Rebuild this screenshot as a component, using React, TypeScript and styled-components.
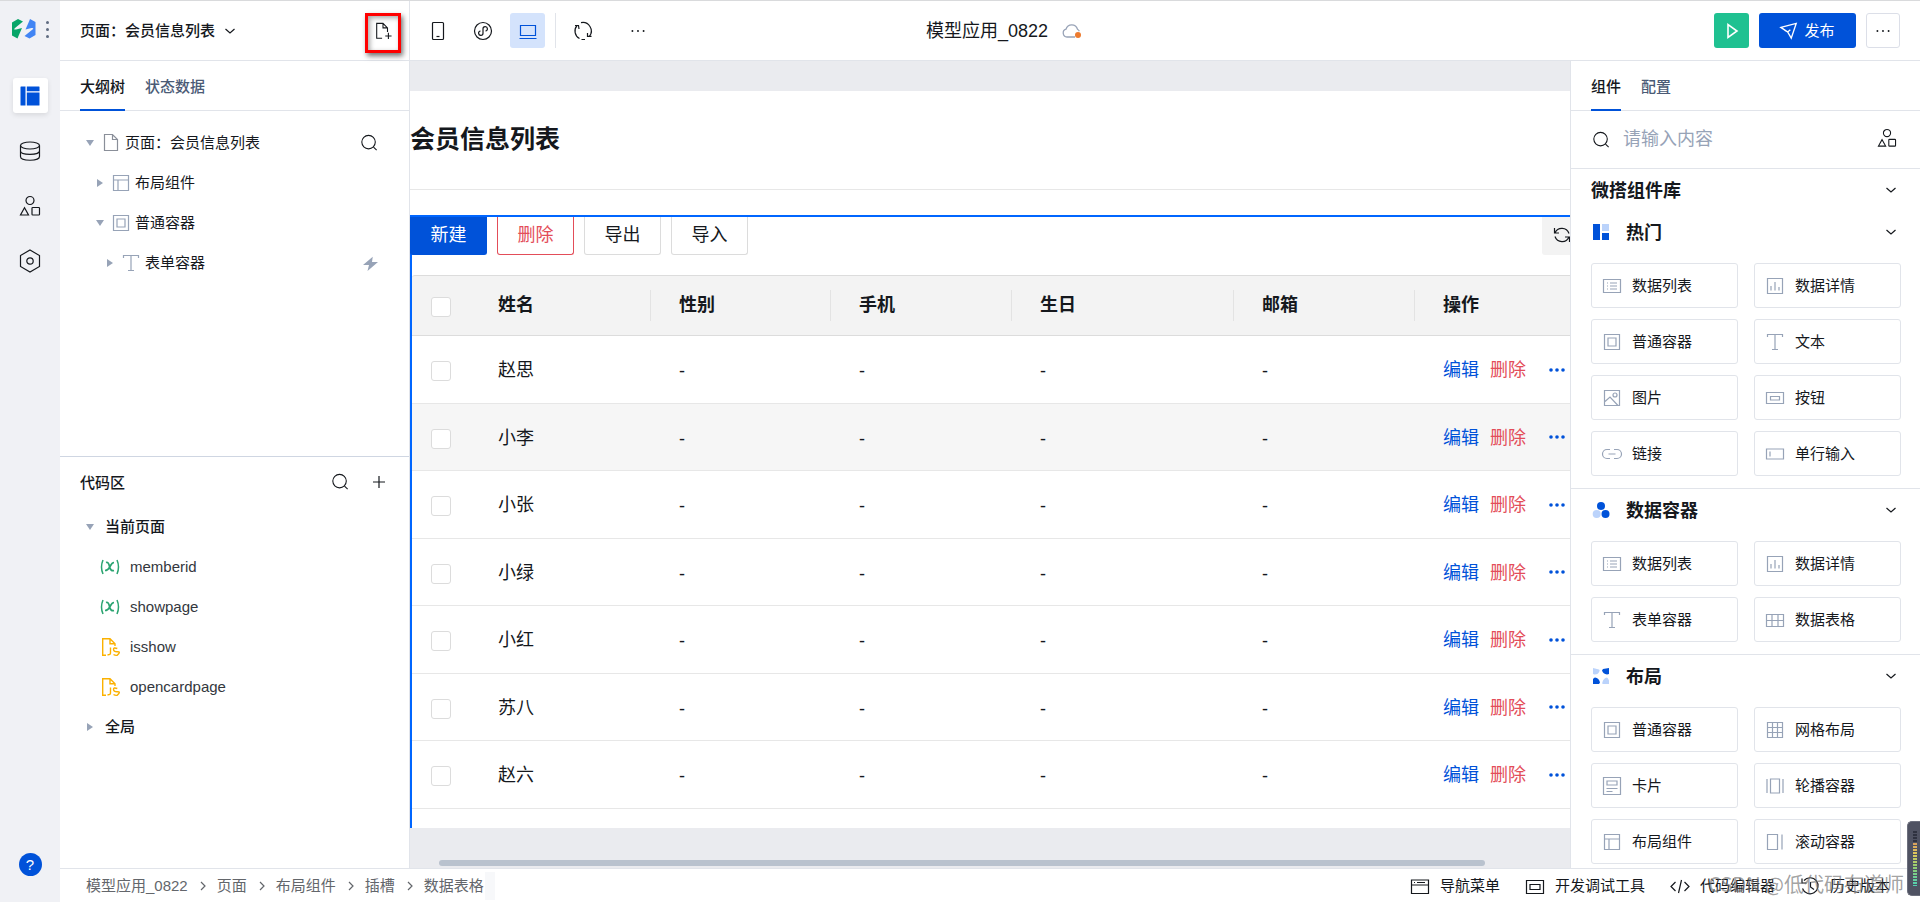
import React from 'react';
import styled, { createGlobalStyle, css } from 'styled-components';

const color = {
  brand: '#0052d9',
  select: '#0066ff',
  line: '#e1e4ea',
  text: '#15181d',
  sub: '#4b5b76',
  mute: '#97a3b7',
  danger: '#e34d59',
  canvas: '#eaebef',
};

const GlobalStyle = createGlobalStyle`
  * { box-sizing: border-box; }
  body { margin: 0; overflow: hidden; }
  body, button, input, table {
    font-family: "Liberation Sans", "Noto Sans CJK SC", sans-serif;
    font-size: 15px;
    color: ${color.text};
  }
  button { border: 0; padding: 0; background: none; cursor: pointer; }
  a { color: inherit; text-decoration: none; }
  h1, h2, h3, ul { margin: 0; padding: 0; font-size: inherit; list-style: none; }
`;

/* ---------- icons ---------- */

const Svg = styled.svg<{ $color?: string }>`
  display: block;
  flex: none;
  overflow: visible;
  fill: none;
  stroke: ${(p) => p.$color || 'currentColor'};
`;

type IconProps = { name: string; size?: number; color?: string };

const S = (d: string) => <path d={d} />;

const icons: Record<string, React.ReactNode> = {
  chevronDown: S('M5.5 8l4.5 4 4.5-4'),
  chevronRight: S('M8 6l4 4-4 4'),
  search: <><circle cx="9.5" cy="9" r="7.500" />{S('M15 14.500l3.500 3.500')}</>,
  plus: S('M4 10h12M10 4v12'),
  filePlus: S('M9 18H3V1.500h7l5 5V11M10 1.500v5h5M16 12v7M12.500 15.500h7'),
  file: S('M3.500 1.500h8l5 5v11h-13zM11.500 1.500v5h5'),
  phone: <><rect x="4.500" y="1.500" width="11" height="17" rx="1" />{S('M8.500 15.500h3')}</>,
  mini: <><circle cx="10" cy="10" r="8.500" />{S('M7.500 10a2.200 2.200 0 1 0 2.500 2.200V7.800A2.200 2.200 0 1 1 12.500 10')}</>,
  laptop: S('M2.500 4.500h15v10h-15zM1.500 17.500h17'),
  cycle: S('M6.500 17.500A8.500 8.500 0 0 1 4 4.500M2 4.500h3.500L6 8M8 1.700a8.500 8.500 0 0 1 8.500 13.500M18.500 15.300h-4V12M8.500 18.500h3.500'),
  refresh: S('M3 8a7.500 7.500 0 0 1 14 .5M17 12a7.500 7.500 0 0 1-14-.5M2.500 3v5h4.500M17.500 17v-5H13'),
  dots: <g fill="currentColor" stroke="none"><circle cx="3" cy="10" r="1.200" /><circle cx="10" cy="10" r="1.200" /><circle cx="17" cy="10" r="1.200" /></g>,
  boldDots: <g fill="currentColor" stroke="none"><circle cx="4" cy="10" r="1.800" /><circle cx="10" cy="10" r="1.800" /><circle cx="16" cy="10" r="1.800" /></g>,
  play: <path d="M6 3.500v13l9-6.500z" strokeWidth="1.600" />,
  send: <path d="M1 6L18 1.500 12.500 18 8.500 11zM8.500 11l3-2.500M5 9l3.500 2" strokeWidth="1.500" />,
  cloud: <><path d="M13 16H5a4 4 0 0 1-1-7.800 6 6 0 0 1 11.500 0q1.500 1 1.800 2" stroke="#98a3b7" strokeWidth="1.300" /><circle cx="16" cy="14" r="3" fill="#ed7b2f" stroke="none" /></>,
  database: <><ellipse cx="10" cy="4.500" rx="9.500" ry="3.500" />{S('M.5 4.500v11c0 5 19 5 19 0v-11M.5 10c0 4.500 19 4.500 19 0')}</>,
  shapes: <><circle cx="10" cy="4.500" r="4" /><rect x="12" y="11.500" width="7.500" height="7.500" rx=".8" />{S('M4.500 11.800L.5 19h8z')}</>,
  hex: <><path d="M10 -1l9.500 5.500v11L10 21 .5 15.500v-11z" /><circle cx="10" cy="10" r="3.200" /></>,
  bolt: <path d="M13 1L0 12h8L6 20 20 8h-8z" fill={color.mute} stroke="none" />,
  variable: <><path d="M3 3q-3 7 0 14M17 3q3 7 0 14" strokeWidth="1.500" /><path d="M6 5.500q2.500-1 3.500 4t4.500 4M14 5.500q-2 0-4 4t-5 4" strokeWidth="1.700" /></>,
  layout: S('M2.500 2.500h15v15h-15zM2.500 7h15M7 7v10.500'),
  box: S('M2.500 2.500h15v15h-15zM6 6h8v8H6z'),
  text: S('M2.500 5V2.500h15V5M10 2.500v15M7 17.500h6'),
  list: S('M1.500 3.500h17v13h-17zM5 7h1M8 7h7M5 10h1M8 10h7M5 13h1M8 13h7'),
  chart: S('M2.500 2.500h15v15h-15zM6 10v4.500M10 6v8.500M14 11v3.500'),
  image: <>{S('M2.500 2.500h15v15h-15zM3 13.500l5-4.500 8 8.500')}<circle cx="13" cy="7" r="2" /></>,
  button: S('M1.500 4.500h17v11h-17zM5.500 8.500h9v3.500h-9z'),
  link: S('M8 5.500H5a4.500 4.500 0 0 0 0 9h3M12 5.500h3a4.500 4.500 0 0 1 0 9h-3M6.500 10h7'),
  input: S('M1.500 5h17v10h-17zM5 7.500v5'),
  table: S('M1.500 4.500h17v12h-17zM1.500 10.500h17M7 4.500v12M13 4.500v12'),
  grid: S('M2.500 2.500h15v15h-15zM2.500 7.500h15M2.500 12.500h15M7.500 2.500v15M12.500 2.500v15'),
  card: S('M1.500 1.500h17v17h-17zM5 5h10v4H5zM4.500 12.500h11M4.500 15.500h6'),
  carousel: S('M5.500 3h9v14h-9zM2 3v14M18 3v14'),
  scroll: S('M2.500 2.500h10v15h-10zM17 2.500v15'),
  navMenu: S('M1.500 4h17v13.500h-17zM1.500 9h17M4 6.500h1M7 6.500h8'),
  devtool: S('M1.500 4.500h17v13h-17zM5 8.500h10v5H5z'),
  code: S('M5.500 6L1 10.500 5.500 15M14.500 6l4.500 4.500-4.500 4.500M11.500 4l-3 13'),
  history: S('M4 4.500a8 8 0 1 1-1.500 8M2 2.500v4.500h4.500M10.500 6v5l3.500 2.500'),
};

const Icon = ({ name, size = 20, color: c }: IconProps) => (
  <Svg width={size} height={size} viewBox="0 0 20 20" strokeWidth="1.200" $color={c} color={c} aria-hidden="true">
    {icons[name]}
  </Svg>
);

const Logo = () => (
  <Svg width="24" height="20" viewBox="0 0 24 20" $color="none" aria-hidden="true">
    <path d="M0 3.500L6 0l5 2.500L3 9q-2 2 1 1.500l6-1.500-3.500 8-1 2.500-5.500-3z" fill="#07a568" />
    <path d="M23.500 16L17.500 19.500l-5-2.500 8-6.500q2-2-1-1.500l-6 1.500 3.500-8L18 0l5.500 3z" fill="#4285f4" />
  </Svg>
);

const RailLayout = () => (
  <Svg width="20" height="20" viewBox="0 0 20 20" $color="none" aria-hidden="true">
    <path d="M1 .5h4.500v19H1a.5.5 0 0 1-.5-.5V1a.5.5 0 0 1 .5-.5zM6.800.5H19q.5 0 .5.5v4.300H6.800zM6.800 6.500h12.700V19q0 .5-.5.500H6.800z" fill={color.brand} />
  </Svg>
);

const JsFile = () => (
  <Svg width="16" height="18" viewBox="0 0 16 18" $color="#fbb100" strokeWidth="1.400" aria-hidden="true">
    <path d="M4 17.300H.700V.700H8l5 5V8M8 .700v5h5" />
    <path d="M8.500 9.500V15q0 2-3 1.700M15.300 10.500q-4-1.500-3.800 1t4 2.300-.3 3.500q-2 .3-3.700-.8" />
  </Svg>
);

const HotMark = () => (
  <Svg width="16" height="16" viewBox="0 0 16 16" $color="none" aria-hidden="true">
    <path d="M0 0h7v16H0zM9 9h7v7H9z" fill={color.brand} /><path d="M9 0h7v7H9z" fill="#bbd3fb" />
  </Svg>
);
const DataMark = () => (
  <Svg width="16" height="16" viewBox="0 0 16 16" $color="none" aria-hidden="true">
    <circle cx="8" cy="4" r="4" fill={color.brand} /><circle cx="12.500" cy="12" r="4" fill={color.brand} /><circle cx="3.700" cy="12" r="4" fill="#bbd3fb" />
  </Svg>
);
const LayoutMark = () => (
  <Svg width="16" height="16" viewBox="0 0 16 16" $color="none" aria-hidden="true">
    <path d="M16 0v6l-2 .500q-4-.5-5-4L10 1zM0 16v-5q1-1.500 2-1.500 4 .500 5 5L6 16z" fill={color.brand} />
    <path d="M0 0l6 1.500q1 .500.500 1.500-1 3.500-5 3.500L0 6zM16 16H9.500q-.5-1 0-2 1-4 4.500-4.500 1 .500 2 3z" fill="#bbd3fb" />
  </Svg>
);

/* ---------- frame ---------- */

const Label = styled.span`
  padding-bottom: 3px;
`;

const Shell = styled.div`
  display: flex;
  height: 100vh;
  border-top: 1px solid #d9dadc;
  background: #fff;
`;

const Rail = styled.nav`
  display: flex;
  flex-direction: column;
  align-items: center;
  width: 60px;
  flex: none;
  padding: 18px 0 26px;
  background: #f0f1f5;
`;
const Brand = styled.div`
  display: flex;
  align-items: center;
  gap: 10px;
  height: 20px;
  margin-bottom: 39px;
`;
const MoreVertical = styled.button`
  display: grid;
  gap: 4px;
  i { width: 3px; height: 3px; border-radius: 50%; background: #5f6b80; }
`;
const RailButton = styled.button<{ $active?: boolean }>`
  display: grid;
  place-items: center;
  width: 35px;
  height: 35px;
  margin-bottom: 20px;
  border-radius: 3px;
  ${(p) => p.$active && css`background: #fff; box-shadow: 0 2px 5px rgba(0, 0, 0, 0.1);`}
`;
const HelpButton = styled.button`
  width: 23px;
  height: 23px;
  margin-top: auto;
  border-radius: 50%;
  background: ${color.brand};
  color: #fff;
`;

const Main = styled.div`
  display: flex;
  flex-direction: column;
  flex: 1;
  min-width: 0;
`;
const Header = styled.header`
  display: grid;
  grid-template-columns: 1fr auto 1fr;
  height: 60px;
  flex: none;
  border-bottom: 1px solid ${color.line};
`;
const HeaderGroup = styled.div<{ $end?: boolean }>`
  display: flex;
  align-items: center;
  gap: 10px;
  ${(p) => p.$end && css`justify-content: flex-end; padding-right: 20px;`}
`;
const PageBar = styled.div`
  display: flex;
  align-items: center;
  justify-content: space-between;
  width: 350px;
  height: 100%;
  padding: 0 8px 0 20px;
  border-right: 1px solid ${color.line};
`;
const PagePicker = styled.button`
  display: flex;
  align-items: center;
  gap: 5px;
  font-weight: 500;
`;
const Marked = styled.div`
  display: grid;
  place-items: center;
  width: 36px;
  height: 40px;
  margin-top: 4px;
  padding-bottom: 4px;
  border: 3px solid #f00;
  box-shadow: 2px 3px 5px rgba(0, 0, 0, 0.55), inset 2px 2px 5px rgba(0, 0, 0, 0.35);
`;
const ToolButton = styled.button<{ $active?: boolean }>`
  display: grid;
  place-items: center;
  width: 35px;
  height: 35px;
  border-radius: 3px;
  ${(p) => p.$active && css`background: #d4e3fc; color: ${color.brand};`}
`;
const ToolGroup = styled.div`
  display: flex;
  gap: 20px;
  padding-left: 9px;
  border-left: 1px solid ${color.line};
`;
const AppTitle = styled.div`
  display: flex;
  align-items: center;
  gap: 14px;
  padding-left: 28px;
  font-size: 18px;
`;
const ActionButton = styled.button<{ $kind: 'run' | 'publish' | 'plain' }>`
  display: flex;
  align-items: center;
  justify-content: center;
  gap: 6px;
  width: ${(p) => ({ run: 35, publish: 97, plain: 34 })[p.$kind]}px;
  height: 35px;
  border-radius: 3px;
  color: ${(p) => (p.$kind === 'plain' ? color.text : '#fff')};
  background: ${(p) => ({ run: '#1fc191', publish: color.brand, plain: '#fff' })[p.$kind]};
  border: ${(p) => (p.$kind === 'plain' ? '1px solid #dcdfe8' : '0')};
`;

const Body = styled.div`
  display: flex;
  flex: 1;
  min-height: 0;
`;

/* ---------- side panels ---------- */

const LeftPanel = styled.aside`
  display: flex;
  flex-direction: column;
  width: 350px;
  flex: none;
  border-right: 1px solid ${color.line};
`;
const Tabs = styled.div`
  display: flex;
  gap: 20px;
  height: 50px;
  flex: none;
  padding: 0 20px;
  border-bottom: 1px solid ${color.line};
`;
const Tab = styled.button<{ $active?: boolean }>`
  height: 50px;
  color: ${(p) => (p.$active ? color.text : color.sub)};
  font-weight: 500;
  border-bottom: 2px solid ${(p) => (p.$active ? color.brand : 'transparent')};
`;
const Outline = styled.ul`
  flex: 345 1 0;
  min-height: 0;
  li:first-child { margin-top: 12px; }
`;
const TreeRow = styled.li<{ $level?: number; $strong?: boolean }>`
  display: flex;
  align-items: center;
  height: 40px;
  padding: 0 31px 0 ${(p) => 20 + (p.$level || 0) * 10}px;
  font-weight: ${(p) => (p.$strong ? 500 : 400)};
`;
const Caret = styled.span<{ $open?: boolean }>`
  display: grid;
  place-items: center;
  width: 20px;
  margin-right: 1px;
  &::before {
    content: '';
    border: 4px solid transparent;
    ${(p) => p.$open
      ? css`border-top: 6px solid ${color.mute}; border-bottom: 0;`
      : css`border-left: 6px solid ${color.mute}; border-right: 0;`}
  }
`;
const TreeLabel = styled(Label)`
  flex: 1;
  padding-left: 4px;
`;
const CodeArea = styled.section`
  flex: 412 1 0;
  min-height: 0;
  border-top: 1px solid #cfd6e2;
`;
const CodeHead = styled.div`
  display: flex;
  align-items: center;
  gap: 20px;
  height: 50px;
  padding: 0 20px;
  h2 { flex: 1; font-weight: 500; }
`;
const CodeRow = styled(TreeRow)`
  color: #33373d;
`;
const CodeIcon = styled.span`
  display: grid;
  place-items: center;
  width: 20px;
  margin: 0 10px;
`;
const PlainButton = styled.button`
  display: grid;
  place-items: center;
`;

const RightPanel = styled.aside`
  width: 350px;
  flex: none;
  border-left: 1px solid ${color.line};
  overflow: hidden;
`;
const SearchRow = styled.div`
  display: flex;
  align-items: center;
  gap: 13px;
  height: 58px;
  padding: 0 24px 0 21px;
  border-bottom: 1px solid ${color.line};
  input {
    flex: 1;
    min-width: 0;
    border: 0;
    padding: 0;
    outline: 0;
    font-size: 18px;
    &::placeholder { color: ${color.mute}; opacity: 1; }
  }
  button { padding-bottom: 4px; }
`;
const SectionHead = styled.h2`
  display: flex;
  align-items: center;
  gap: 17px;
  height: 42px;
  padding: 0 19px 0 20px;
  font-size: 18px;
  font-weight: 700;
  ${Label} { flex: 1; }
`;
const Section = styled.section`
  padding-bottom: 12px;
  border-bottom: 1px solid ${color.line};
  ${SectionHead} { padding-left: 22px; }
`;
const CardGrid = styled.div`
  display: grid;
  grid-template-columns: 1fr 1fr;
  gap: 11px 16px;
  padding: 10px 19px 0 20px;
`;
const ComponentCard = styled.button`
  display: flex;
  align-items: center;
  gap: 10px;
  height: 45px;
  padding: 0 10px;
  border: 1px solid ${color.line};
  border-radius: 3px;
`;

/* ---------- canvas ---------- */

const Canvas = styled.main`
  display: flex;
  flex-direction: column;
  flex: 1;
  min-width: 0;
  overflow: hidden;
  padding-top: 30px;
  background: ${color.canvas};
`;
const PageSheet = styled.div`
  flex: none;
  background: #fff;
`;
const PageTitle = styled.h1`
  height: 99px;
  line-height: 97px;
  margin-bottom: 25px;
  border-bottom: 1px solid #e7e7e7;
  font-size: 25px;
  font-weight: 700;
`;
const Selection = styled.div`
  padding-bottom: 19px;
  box-shadow: inset 2px 2px 0 ${color.select};
  overflow: hidden;
`;
const TableTools = styled.div`
  display: flex;
  gap: 10px;
  width: calc(100% + 22px);
  height: 60px;
`;
const TableButton = styled.button<{ $kind?: 'primary' | 'danger' | 'icon' }>`
  display: grid;
  place-items: center;
  width: 77px;
  height: 38px;
  margin-top: 2px;
  padding-bottom: 6px;
  border: 1px solid #dcdcdc;
  border-top: 0;
  border-radius: 0 0 3px 3px;
  background: #fff;
  font-size: 18px;
  ${(p) => p.$kind === 'primary' && css`background: ${color.brand}; border-color: ${color.brand}; color: #fff;`}
  ${(p) => p.$kind === 'danger' && css`border-color: ${color.danger}; color: ${color.danger};`}
  ${(p) => p.$kind === 'icon' && css`width: 50px; margin-left: auto; padding: 0 0 2px 10px; justify-content: start; background: #f3f3f3; border: 0;`}
`;
const TableFrame = styled.div`
  margin-left: 2px;
`;
const DataTable = styled.table`
  width: 100%;
  border-collapse: separate;
  border-spacing: 0;
  table-layout: fixed;
  font-size: 18px;
  th, td { padding: 0 0 3px 28px; text-align: left; border-bottom: 1px solid #e7e7e7; overflow: hidden; white-space: nowrap; }
  th {
    height: 61px;
    padding-bottom: 5px;
    background: #f3f3f3;
    border-top: 1px solid #dcdcdc;
    border-bottom-color: #dcdcdc;
    font-weight: 700;
  }
  th:first-child, td:first-child { padding-left: 19px; padding-bottom: 0; }
  th:first-child { border-top-left-radius: 3px; }
  th:nth-child(n + 2):not(:last-child) {
    background: linear-gradient(#e3e3e3, #e3e3e3) right center / 1px 31px no-repeat #f3f3f3;
  }
  td { height: 68px; }
  tbody tr:nth-child(even) td { height: 67px; }
`;
const Row = styled.tr<{ $hover: boolean }>`
  background: ${(p) => (p.$hover ? '#f6f6f6' : '#fff')};
`;
const Check = styled.input`
  appearance: none;
  display: block;
  width: 20px;
  height: 20px;
  margin: 3px 0 0;
  border: 1px solid #dcdcdc;
  border-radius: 3px;
  background: #fff;
`;
const EmptyCell = styled.td`
  && { padding-top: 4px; padding-bottom: 0; }
`;
const RowActions = styled.div`
  display: flex;
  align-items: center;
  gap: 11px;
`;
const TextButton = styled.button<{ $danger?: boolean }>`
  font-size: 18px;
  color: ${(p) => (p.$danger ? color.danger : color.brand)};
`;
const DotsButton = styled.button`
  margin-left: 10px;
  padding-top: 3px;
  color: ${color.brand};
`;
const ScrollTrack = styled.div`
  margin: auto 85px 2px 29px;
  height: 6px;
  border-radius: 3px;
  background: #b9c2ce;
`;

/* ---------- footer ---------- */

const Footer = styled.footer`
  display: flex;
  align-items: center;
  justify-content: space-between;
  height: 34px;
  flex: none;
  padding: 0 30px 0 26px;
  border-top: 1px solid ${color.line};
`;
const Crumbs = styled.nav`
  display: flex;
  align-items: center;
  height: 28px;
  padding-right: 11px;
  color: #63666b;
  background: linear-gradient(#f7f8fa, #f7f8fa) right / 10px 100% no-repeat;
  svg { margin: 0 4px 0 5px; }
  a { padding-bottom: 3px; }
`;
const FooterTools = styled.div`
  display: flex;
  gap: 25px;
`;
const FooterButton = styled.button`
  display: flex;
  align-items: center;
  gap: 10px;
`;
const Watermark = styled.div`
  position: absolute;
  right: 16px;
  bottom: 3px;
  font: 20px/30px "Noto Sans CJK SC", sans-serif;
  color: rgba(110, 110, 110, 0.65);
  pointer-events: none;
`;
const LevelMeter = styled.div`
  position: absolute;
  right: 0;
  bottom: 6px;
  width: 13px;
  height: 75px;
  padding: 9px 3px 9px 5px;
  border: 1px solid #6c6f7d;
  border-right: 0;
  border-radius: 5px 0 0 5px;
  background: #4f5262;
  &::before {
    content: '';
    display: block;
    height: 100%;
    background:
      repeating-linear-gradient(transparent 0 2px, #4f5262 2px 3px),
      linear-gradient(#2f3240 0 20%, #d9a05c 22%, #dfc95c 42%, #93cf70 65%, #4fd0b4);
  }
`;

/* ---------- data ---------- */

const people = ['赵思', '小李', '小张', '小绿', '小红', '苏八', '赵六'];
const columns = ['姓名', '性别', '手机', '生日', '邮箱'];
const widths = [58, 181, 180, 181, 222, 181];

const library = [
  { title: '热门', mark: <HotMark />, items: [['list', '数据列表'], ['chart', '数据详情'], ['box', '普通容器'], ['text', '文本'], ['image', '图片'], ['button', '按钮'], ['link', '链接'], ['input', '单行输入']] },
  { title: '数据容器', mark: <DataMark />, items: [['list', '数据列表'], ['chart', '数据详情'], ['text', '表单容器'], ['table', '数据表格']] },
  { title: '布局', mark: <LayoutMark />, items: [['box', '普通容器'], ['grid', '网格布局'], ['card', '卡片'], ['carousel', '轮播容器'], ['layout', '布局组件'], ['scroll', '滚动容器']] },
];
const crumbs = ['模型应用_0822', '页面', '布局组件', '插槽', '数据表格'];
const footerTools = [['navMenu', '导航菜单'], ['devtool', '开发调试工具'], ['code', '代码编辑器'], ['history', '历史版本']];

const VarIcon = () => (
  <CodeIcon><Icon name="variable" color="#2ba471" /></CodeIcon>
);

export default function App() {
  return (
    <Shell>
      <GlobalStyle />
      <Rail>
        <Brand>
          <Logo />
          <MoreVertical aria-label="菜单"><i /><i /><i /></MoreVertical>
        </Brand>
        <RailButton $active aria-label="页面"><RailLayout /></RailButton>
        <RailButton aria-label="数据源"><Icon name="database" /></RailButton>
        <RailButton aria-label="组件"><Icon name="shapes" /></RailButton>
        <RailButton aria-label="设置"><Icon name="hex" /></RailButton>
        <HelpButton>?</HelpButton>
      </Rail>

      <Main>
        <Header>
          <HeaderGroup>
            <PageBar>
              <PagePicker><Label>页面：会员信息列表</Label><Icon name="chevronDown" /></PagePicker>
              <Marked>
                <PlainButton aria-label="新建页面"><Icon name="filePlus" size={18} /></PlainButton>
              </Marked>
            </PageBar>
            <ToolButton aria-label="手机"><Icon name="phone" /></ToolButton>
            <ToolButton aria-label="小程序"><Icon name="mini" /></ToolButton>
            <ToolButton $active aria-label="电脑"><Icon name="laptop" /></ToolButton>
            <ToolGroup>
              <ToolButton aria-label="刷新"><Icon name="cycle" /></ToolButton>
              <ToolButton aria-label="更多"><Icon name="dots" size={16} /></ToolButton>
            </ToolGroup>
          </HeaderGroup>
          <AppTitle><Label>模型应用_0822</Label><Icon name="cloud" /></AppTitle>
          <HeaderGroup $end>
            <ActionButton $kind="run" aria-label="预览"><Icon name="play" /></ActionButton>
            <ActionButton $kind="publish"><Icon name="send" size={18} /><Label>发布</Label></ActionButton>
            <ActionButton $kind="plain" aria-label="更多"><Icon name="dots" size={16} /></ActionButton>
          </HeaderGroup>
        </Header>

        <Body>
          <LeftPanel>
            <Tabs>
              <Tab $active>大纲树</Tab>
              <Tab>状态数据</Tab>
            </Tabs>
            <Outline>
              <TreeRow>
                <Caret $open /><Icon name="file" color="#8a8f99" />
                <TreeLabel>页面：会员信息列表</TreeLabel>
                <PlainButton aria-label="搜索"><Icon name="search" size={18} /></PlainButton>
              </TreeRow>
              <TreeRow $level={1}>
                <Caret /><Icon name="layout" color={color.mute} /><TreeLabel>布局组件</TreeLabel>
              </TreeRow>
              <TreeRow $level={1}>
                <Caret $open /><Icon name="box" color={color.mute} /><TreeLabel>普通容器</TreeLabel>
              </TreeRow>
              <TreeRow $level={2}>
                <Caret /><Icon name="text" color={color.mute} /><TreeLabel>表单容器</TreeLabel>
                <Icon name="bolt" size={15} />
              </TreeRow>
            </Outline>
            <CodeArea>
              <CodeHead>
                <h2><Label>代码区</Label></h2>
                <PlainButton aria-label="搜索代码"><Icon name="search" size={18} /></PlainButton>
                <PlainButton aria-label="新增"><Icon name="plus" /></PlainButton>
              </CodeHead>
              <ul>
                <TreeRow $strong><Caret $open /><TreeLabel>当前页面</TreeLabel></TreeRow>
                <CodeRow $level={1}><VarIcon />memberid</CodeRow>
                <CodeRow $level={1}><VarIcon />showpage</CodeRow>
                <CodeRow $level={1}><CodeIcon><JsFile /></CodeIcon>isshow</CodeRow>
                <CodeRow $level={1}><CodeIcon><JsFile /></CodeIcon>opencardpage</CodeRow>
                <TreeRow $strong><Caret /><TreeLabel>全局</TreeLabel></TreeRow>
              </ul>
            </CodeArea>
          </LeftPanel>

          <Canvas>
            <PageSheet>
              <PageTitle>会员信息列表</PageTitle>
              <Selection>
                <TableTools>
                  <TableButton $kind="primary">新建</TableButton>
                  <TableButton $kind="danger">删除</TableButton>
                  <TableButton>导出</TableButton>
                  <TableButton>导入</TableButton>
                  <TableButton $kind="icon" aria-label="刷新表格"><Icon name="refresh" /></TableButton>
                </TableTools>
                <TableFrame>
                  <DataTable>
                    <colgroup>{widths.map((w, i) => <col key={i} width={w} />)}<col /></colgroup>
                    <thead>
                      <tr>
                        <th><Check type="checkbox" aria-label="全选" /></th>
                        {columns.map((c) => <th key={c}>{c}</th>)}
                        <th>操作</th>
                      </tr>
                    </thead>
                    <tbody>
                      {people.map((name, i) => (
                        <Row key={name} $hover={i === 1}>
                          <td><Check type="checkbox" aria-label={name} /></td>
                          <td>{name}</td>
                          {columns.slice(1).map((c) => <EmptyCell key={c}>-</EmptyCell>)}
                          <td>
                            <RowActions>
                              <TextButton>编辑</TextButton>
                              <TextButton $danger>删除</TextButton>
                              <DotsButton aria-label="更多操作"><Icon name="boldDots" /></DotsButton>
                            </RowActions>
                          </td>
                        </Row>
                      ))}
                    </tbody>
                  </DataTable>
                </TableFrame>
              </Selection>
            </PageSheet>
            <ScrollTrack />
          </Canvas>

          <RightPanel>
            <Tabs>
              <Tab $active>组件</Tab>
              <Tab>配置</Tab>
            </Tabs>
            <SearchRow>
              <Icon name="search" size={18} />
              <input type="text" placeholder="请输入内容" aria-label="搜索组件" />
              <PlainButton aria-label="组件库"><Icon name="shapes" size={18} /></PlainButton>
            </SearchRow>
            <SectionHead><Label>微搭组件库</Label><Icon name="chevronDown" /></SectionHead>
            {library.map((s) => (
              <Section key={s.title}>
                <SectionHead>{s.mark}<Label>{s.title}</Label><Icon name="chevronDown" /></SectionHead>
                <CardGrid>
                  {s.items.map(([icon, label]) => (
                    <ComponentCard key={label}><Icon name={icon} color={color.mute} /><Label>{label}</Label></ComponentCard>
                  ))}
                </CardGrid>
              </Section>
            ))}
          </RightPanel>
        </Body>

        <Footer>
          <Crumbs>
            {crumbs.map((c, i) => (
              <React.Fragment key={c}>
                {i > 0 && <Icon name="chevronRight" />}
                <a href="#">{c}</a>
              </React.Fragment>
            ))}
          </Crumbs>
          <FooterTools>
            {footerTools.map(([icon, label]) => (
              <FooterButton key={label}><Icon name={icon} /><Label>{label}</Label></FooterButton>
            ))}
          </FooterTools>
        </Footer>
      </Main>
      <Watermark>CSDN @低代码布道师</Watermark>
      <LevelMeter />
    </Shell>
  );
}
